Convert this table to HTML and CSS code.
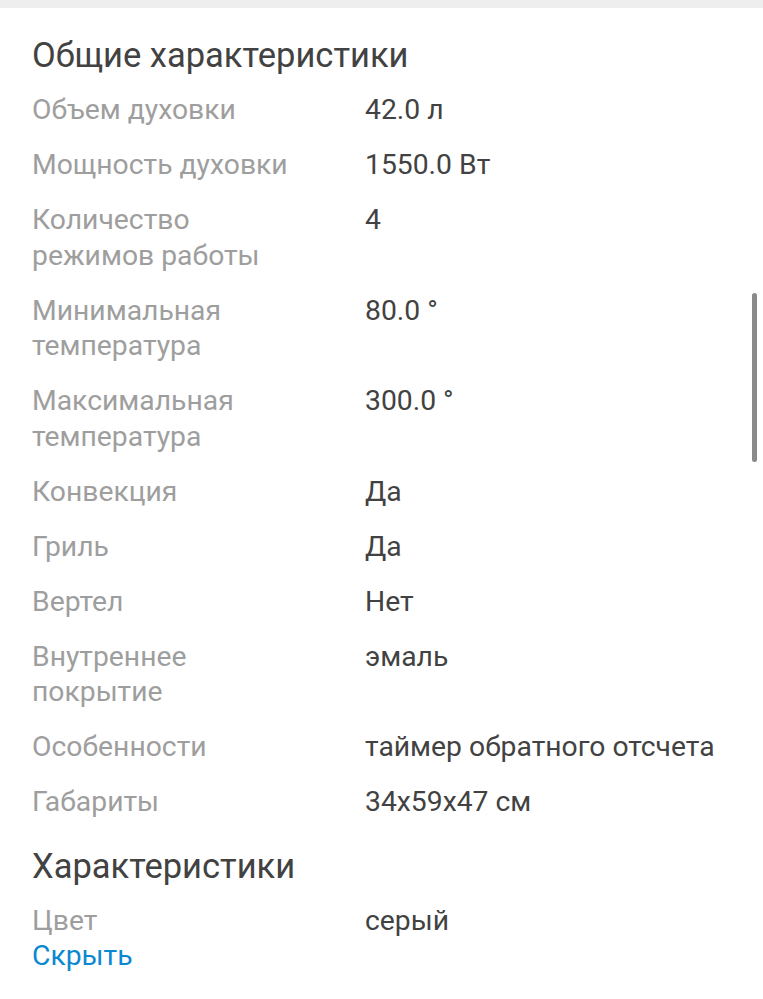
FILE: index.html
```html
<!DOCTYPE html>
<html lang="ru">
<head>
<meta charset="utf-8">
<title>Характеристики</title>
<link rel="stylesheet" href="styles.css">
</head>
<body>
<div class="topbar"></div>
<main class="page">
  <section class="group">
    <h2 class="group-title">Общие характеристики</h2>
    <dl class="specs">
      <div class="row"><dt>Объем духовки</dt><dd>42.0 л</dd></div>
      <div class="row"><dt>Мощность духовки</dt><dd>1550.0 Вт</dd></div>
      <div class="row"><dt>Количество режимов работы</dt><dd>4</dd></div>
      <div class="row"><dt>Минимальная температура</dt><dd>80.0 °</dd></div>
      <div class="row"><dt>Максимальная температура</dt><dd>300.0 °</dd></div>
      <div class="row"><dt>Конвекция</dt><dd>Да</dd></div>
      <div class="row"><dt>Гриль</dt><dd>Да</dd></div>
      <div class="row"><dt>Вертел</dt><dd>Нет</dd></div>
      <div class="row"><dt>Внутреннее покрытие</dt><dd>эмаль</dd></div>
      <div class="row"><dt>Особенности</dt><dd>таймер обратного отсчета</dd></div>
      <div class="row"><dt>Габариты</dt><dd>34x59x47 см</dd></div>
    </dl>
  </section>
  <section class="group group-second">
    <h2 class="group-title">Характеристики</h2>
    <dl class="specs">
      <div class="row"><dt>Цвет</dt><dd>серый</dd></div>
    </dl>
    <a class="toggle" href="#">Скрыть</a>
  </section>
</main>
<div class="scrollbar"></div>
</body>
</html>
```
FILE: styles.css
```css
html, body {
  margin: 0;
  padding: 0;
  background: #ffffff;
}
body {
  font-family: Roboto, "Noto Sans", sans-serif;
  width: 763px;
  height: 999px;
  overflow: hidden;
  position: relative;
}
.topbar {
  height: 8px;
  background: #eeeeee;
}
.page {
  padding: 0 32px;
}
.group-title {
  margin: 27px 0 0;
  font-size: 34.5px;
  line-height: 40px;
  font-weight: 400;
  color: #424242;
}
.group-second .group-title {
  margin-top: 26.5px;
}
.specs {
  margin: 17px 0 0;
  display: flex;
  flex-direction: column;
  gap: 19.5px;
}
.group-second .specs {
  margin-top: 16.5px;
}
.row {
  display: grid;
  grid-template-columns: 270px 1fr;
  column-gap: 63px;
  font-size: 28.3px;
  line-height: 35.5px;
}
.row dt {
  color: #9e9e9e;
  margin: 0;
}
.row dd {
  color: #424242;
  margin: 0;
}
.toggle {
  display: block;
  font-size: 28.3px;
  line-height: 35.5px;
  color: #0a88d0;
  text-decoration: none;
}
.scrollbar {
  position: absolute;
  left: 752px;
  top: 293px;
  width: 5px;
  height: 169px;
  border-radius: 3px;
  background: #8a8a8a;
}
```
